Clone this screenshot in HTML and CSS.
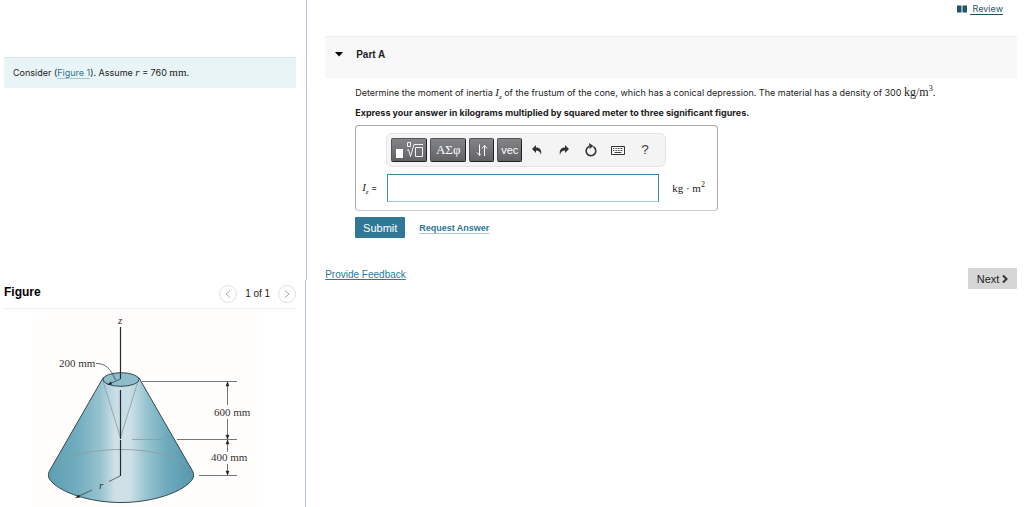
FILE: index.html
```html
<!DOCTYPE html>
<html lang="en">
<head>
<meta charset="utf-8">
<title>Moment of inertia</title>
<link rel="stylesheet" href="styles.css">
</head>
<body>
<div class="page">
  <aside class="side">
    <section class="intro">
      <p class="intro-box">Consider (<a class="link" href="#figure">Figure 1</a>). Assume <span class="math"><i>r</i></span> = 760 <span class="math">mm</span>.</p>
    </section>
    <section class="figure" id="figure">
      <header class="figure-head">
        <h2 class="figure-title">Figure</h2>
        <nav class="pager" aria-label="Figures">
          <button class="round" type="button" aria-label="Previous figure"><svg width="6" height="8" viewBox="0 0 6 8"><path d="M5 0.5 1 4l4 3.500" /></svg></button>
          <span class="pager-count">1 of 1</span>
          <button class="round" type="button" aria-label="Next figure"><svg width="6" height="8" viewBox="0 0 6 8"><path d="M1 0.500 5 4l-4 3.500" /></svg></button>
        </nav>
      </header>
      <svg class="cone" width="231" height="193" viewBox="34 4 231 193" role="img" aria-label="Frustum of a cone with a conical depression">
        <defs>
          <linearGradient id="shell" x1="0" x2="1" y1="0" y2="0">
            <stop offset="0" stop-color="#5d9fb3"/>
            <stop offset="0.200" stop-color="#70adbe"/>
            <stop offset="0.360" stop-color="#98c3d0"/>
            <stop offset="0.460" stop-color="#cfe1e7"/>
            <stop offset="0.560" stop-color="#cfe1e7"/>
            <stop offset="0.680" stop-color="#96c2cf"/>
            <stop offset="0.820" stop-color="#6daabc"/>
            <stop offset="1" stop-color="#5798ad"/>
          </linearGradient>
        </defs>
        <rect x="34" y="4" width="231" height="193" fill="#fffefc"/>
        <g transform="translate(30 0)">
          <path d="M73 68 20 160C17 165 18 169 24 174C37 185 64 192.500 91 192.500S145 185 158 174C164 169 165 165 162 160L109 68Z" fill="url(#shell)" stroke="#334950"/>
          <path d="M73 71 90.500 128 108 71" fill="#b9d6df" fill-opacity=".35" stroke="#8b999e" stroke-width=".8"/>
          <path d="M26 155C37 145 64 139.500 91 139.500S145 145 156 155" fill="none" stroke="#8a9a9f" stroke-width=".8"/>
          <ellipse cx="91" cy="69.500" rx="18" ry="6.800" fill="#8dbdcb" stroke="#334950"/>
          <path d="M90.500 17V69M90.500 80V129M90.500 130V166" stroke="#262b2e" stroke-width="1.200" fill="none"/>
          <path d="M90.500 69 79 74M66 53.500C75 53 81 59 85.500 70M90 166 79 171.500M62 180 47 187" stroke="#3c4448" stroke-width=".8" fill="none"/>
          <path d="M77 75 81 71.500 82 74.500ZM45 188 49 184.500 50 187.500Z" fill="#222"/>
          <path d="M102 129.500H134" stroke="#899da3" stroke-width=".8"/>
          <path d="M112 71.500H207M147 129.500H207M169 165.500H207M197.500 72V95M197.500 109V129M197.500 130V142M197.500 154V165" stroke="#71777a" stroke-width="1" fill="none"/>
          <path d="M197.500 72 196 76H199ZM197.500 129 196 125H199ZM197.500 130 196 134H199ZM197.500 165 196 161H199Z" fill="#222" stroke="#222" stroke-width=".5"/>
          <g class="cone-text">
            <text x="88" y="14"><tspan font-style="italic">z</tspan></text>
            <text x="29" y="57">200 mm</text>
            <text x="184" y="106">600 mm</text>
            <text x="181" y="151">400 mm</text>
            <text x="69" y="179"><tspan font-style="italic">r</tspan></text>
          </g>
        </g>
      </svg>
    </section>
  </aside>
  <main class="main">
    <div class="topbar">
      <a class="review" href="#review"><svg width="10" height="8" viewBox="0 0 10 8"><path d="M0 0.500H4.500V7.500H0ZM5.500 0.500H10V7.500H5.500Z"/></svg><span class="review-text">&nbsp;Review</span></a>
    </div>
    <header class="part">
      <button class="toggle" type="button" aria-label="Collapse part"><svg width="8" height="5" viewBox="0 0 8 5"><path d="M0 0H8L4 4.500Z"/></svg></button>
      <h1 class="part-title">Part A</h1>
    </header>
    <form class="task">
      <p class="prompt">Determine the moment of inertia <span class="math"><i>I</i><sub><i>z</i></sub></span> of the frustum of the cone, which has a conical depression. The material has a density of 300 <span class="math big">kg/m<sup>3</sup></span>.</p>
      <p class="hint">Express your answer in kilograms multiplied by squared meter to three significant figures.</p>
      <div class="answer">
        <div class="tools">
          <button class="key wide" type="button" aria-label="Templates"><svg width="28" height="18" viewBox="0 0 28 18"><path d="M1 8h7v9H1Z" fill="#fff"/><g fill="none" stroke="#f2f2f2"><path d="M12.500 1.500h3v4h-3ZM12 9.500l1.500-1L15.500 15.500 19 3.500H28M20.500 6.500h7v9h-7Z"/></g></svg></button>
          <button class="key wide greek" type="button">ΑΣφ</button>
          <button class="key" type="button" aria-label="Subscripts and superscripts"><svg width="12" height="13" viewBox="0 0 12 13"><path d="M3.500 0.500V11M1 8.500 3.500 11.500 4.500 10M8.500 12V2M6 4.500 8.500 1.500 11 4.500" fill="none" stroke="#fff"/></svg></button>
          <button class="key vec" type="button">vec</button>
          <button class="plain" type="button" aria-label="Undo"><svg width="10" height="10" viewBox="0 0 10 10"><path d="M0 4 4 0V2.500C8 2.500 10 5 9 10C8.500 7 7 5.500 4 5.500V8Z"/></svg></button>
          <button class="plain" type="button" aria-label="Redo"><svg width="10" height="10" viewBox="0 0 10 10"><path d="M10 4 6 0V2.500C2 2.500 0 5 1 10C1.500 7 3 5.500 6 5.500V8Z"/></svg></button>
          <button class="plain" type="button" aria-label="Reset"><svg width="12" height="14" viewBox="0 0 12 14"><path d="M8.500 3.800A4.800 4.800 0 1 1 4 3.500" fill="none" stroke="#333" stroke-width="1.600"/><path d="M4 0 8.500 3 4.500 6Z"/></svg></button>
          <button class="plain" type="button" aria-label="Keyboard"><svg width="14" height="9" viewBox="0 0 14 9"><path d="M.5.5h13v8H.5Z" fill="#fff" stroke="#333"/><path d="M2 2.500H12M2 4.500H12" stroke="#444" stroke-width="1.200" stroke-dasharray="1 .6"/><path d="M3.500 6.500H10.500" stroke="#444"/></svg></button>
          <button class="plain help" type="button" aria-label="Help">?</button>
        </div>
        <div class="entry">
          <label class="entry-label" for="value"><span class="math"><i>I</i><sub><i>z</i></sub></span> =</label>
          <input class="entry-input" id="value" type="text">
          <span class="math unit">kg · m<sup>2</sup></span>
        </div>
      </div>
      <div class="actions">
        <button class="submit" type="button">Submit</button>
        <a class="request" href="#answer">Request Answer</a>
      </div>
    </form>
    <footer class="foot">
      <a class="feedback" href="#feedback">Provide Feedback</a>
      <button class="next" type="button">Next <svg width="6" height="8" viewBox="0 0 6 8"><path d="M1 0.500 4.500 4 1 7.500" fill="none" stroke="#333" stroke-width="2"/></svg></button>
    </footer>
  </main>
</div>
</body>
</html>
```
FILE: styles.css
```css
* { box-sizing: border-box; }
body {
  margin: 0;
  background: #fff;
  color: #222;
  font: 9px/16px Inter, "Liberation Sans", Arial, sans-serif;
}
h1, h2, p { margin: 0; }
button { font: inherit; color: inherit; border: 0; padding: 0; cursor: pointer; }
svg { display: block; }
sub, sup { font-size: 8px; line-height: 0; }
sub { font-size: 7px; }

.page { display: grid; grid-template-columns: 30% 1fr; min-height: 100vh; }
.side { display: flex; flex-direction: column; }
.intro { height: 280px; padding: 57px 10px 0 4px; border-right: 1px solid #b5c9d8; }
.intro-box { padding: 7px 9px; background: #e9f4f6; border-top: 1px solid #dbe9ed; }
.link { color: #2f7896; text-decoration-color: #a6c9d7; text-underline-offset: 2px; }
.math { font-family: "Liberation Serif", "Times New Roman", serif; font-size: 11px; line-height: 0; }
.big { font-size: 12px; }

.figure { flex: 1; margin-right: 1px; padding: 0 9px 0 4px; border-right: 1px solid #b2c3da; }
.figure-head { display: flex; justify-content: space-between; align-items: center; height: 29px; border-bottom: 1px solid #eee; }
.figure-title { font: bold 12px/16px "Liberation Sans", Arial, sans-serif; padding-bottom: 4px; color: #000; }
.pager { display: flex; align-items: center; gap: 8px; }
.pager-count { font: 10px/16px "Liberation Sans", Arial, sans-serif; }
.round { display: grid; place-items: center; width: 18px; height: 18px; border: 1px solid #e2e2e2; border-radius: 50%; background: #fff; }
.round path { fill: none; stroke: #aaa; }
.cone { margin: 5px 0 0 30px; }
.cone-text { font: 11px "Liberation Serif", "Times New Roman", serif; fill: #333; }

.main { padding: 0 7px 0 18px; }
.topbar { display: flex; justify-content: flex-end; height: 36px; padding: 1px 14px 0 0; }
.review { display: flex; align-items: center; gap: 3px; height: 16px; color: #1f5567; text-decoration: none; }
.review svg { fill: #1f5567; }
.review-text { text-decoration: underline; text-underline-offset: 2px; }
.part { display: flex; align-items: center; gap: 13px; height: 42px; padding: 0 10px 6px; background: #f8f8f8; border-top: 1px solid #eee; }
.toggle { background: none; }
.part-title { font: bold 10px/16px "Liberation Sans", Arial, sans-serif; }

.task { padding: 5px 0 0 30px; }
.prompt, .hint { line-height: 20px; }
.hint { font-weight: bold; }
.answer { width: 363px; max-width: 100%; margin-top: 2px; padding: 7px 6px 8px; border: 1px solid #aaa; border-bottom-color: #ccc; border-radius: 4px; }
.tools { display: flex; align-items: center; width: 280px; height: 34px; margin-left: 24px; padding: 0 4px; gap: 3px; background: #f4f4f4; border: 1px solid #e4e4e4; border-radius: 6px; }
.key { display: grid; place-items: center; width: 25px; height: 24px; color: #fff; background: linear-gradient(#858589, #626266); border: 1px solid #555; border-right-color: #222; border-bottom-color: #222; border-radius: 2px; }
.wide { width: 36px; }
.greek { font-family: "Liberation Serif", "Times New Roman", serif; font-size: 13px; }
.vec { font-family: "Liberation Sans", Arial, sans-serif; font-size: 11px; }
.plain { display: grid; place-items: center; width: 24px; height: 24px; background: none; color: #333; }
.plain svg { fill: #333; }
.help { font-family: "Liberation Sans", Arial, sans-serif; font-size: 13px; }
.entry { display: flex; align-items: center; margin-top: 7px; }
.entry-label { width: 25px; white-space: nowrap; }
.entry-input { width: 272px; height: 28px; margin-right: 13px; padding: 0 6px; font: inherit; background: #fff; border: 1px solid #3f83a2; border-bottom-color: #a6c9d3; border-radius: 0; }
.unit { white-space: nowrap; line-height: 16px; }
.actions { display: flex; align-items: center; gap: 14px; margin-top: 6px; }
.submit { width: 50px; height: 21px; color: #fff; background: #317896; border-radius: 1px; font-family: "Liberation Sans", Arial, sans-serif; font-size: 11px; }
.request { color: #2f7896; font: bold 9px/16px "Liberation Sans", Arial, sans-serif; text-decoration-color: #a6c9d7; text-underline-offset: 2px; }
.foot { display: flex; justify-content: space-between; align-items: flex-start; margin-top: 30px; }
.feedback { color: #2f7896; font: 10px/14px "Liberation Sans", Arial, sans-serif; text-underline-offset: 1px; }
.next { display: flex; align-items: center; justify-content: center; gap: 3px; width: 49px; height: 21px; background: #d6d6d6; border-radius: 1px; font-family: "Liberation Sans", Arial, sans-serif; font-size: 11px; }
```
